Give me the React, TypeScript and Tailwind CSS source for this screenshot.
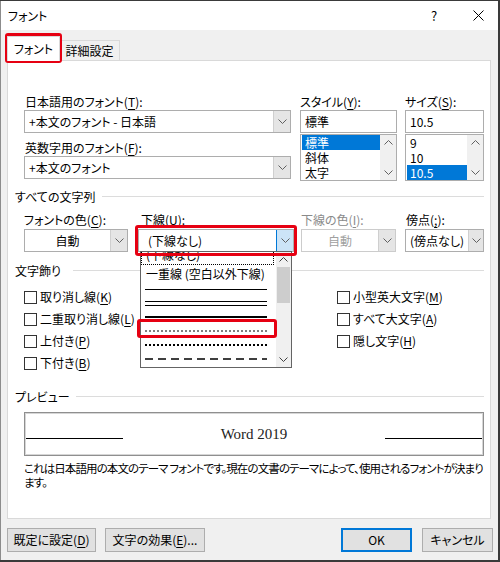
import React from "react";

const Chev = ({ up = false, color = "#606060" }: { up?: boolean; color?: string }) => (
  <svg width="9" height="5" viewBox="0 0 9 5" className="block">
    <polyline
      points={up ? "0.5,4.5 4.5,0.5 8.5,4.5" : "0.5,0.5 4.5,4.5 8.5,0.5"}
      fill="none"
      stroke={color}
      strokeWidth="1"
    />
  </svg>
);

const M = ({ c }: { c: string }) => <span className="underline underline-offset-[2px]">{c}</span>;

function Combo({
  children,
  center = false,
  disabled = false,
  focused = false,
}: {
  children: React.ReactNode;
  center?: boolean;
  disabled?: boolean;
  focused?: boolean;
}) {
  return (
    <div className={`flex h-[23px] border ${disabled ? "border-[#cccccc]" : "border-[#adadad]"} bg-white`}>
      <div
        className={`flex-1 flex items-center px-[4px] whitespace-nowrap ${center ? "justify-center" : ""} ${
          disabled ? "text-[#a0a0a0]" : ""
        }`}
      >
        {children}
      </div>
      <div
        className={`w-[17px] border-l flex items-center justify-center ${
          focused ? "bg-[#cce4f7] border-[#0078d7]" : "bg-[#e5e5e5] border-[#cfcfcf]"
        }`}
      >
        <Chev />
      </div>
    </div>
  );
}

function ListBox({ items, sel }: { items: string[]; sel: number }) {
  return (
    <div className="mt-px h-[47px] border border-[#adadad] bg-white flex overflow-hidden">
      <div className="flex-1 flex flex-col pl-px">
        {items.map((t, i) => (
          <div
            key={t}
            className={`h-[15px] leading-[15px] px-[3px] ${i === sel ? "bg-[#0078d7] text-white" : ""}`}
          >
            {t}
          </div>
        ))}
      </div>
      <div className="w-[16px] bg-[#f0f0f0] flex flex-col items-center justify-between py-[5px]">
        <Chev up />
        <Chev />
      </div>
    </div>
  );
}

const Section = ({ title, gap, className = "" }: { title: string; gap: string; className?: string }) => (
  <div className={`flex items-center -ml-[9px] h-[17px] ${className}`}>
    <span className="whitespace-nowrap">{title}</span>
    <div className={`flex-1 h-px bg-[#dcdcdc] ${gap}`} />
  </div>
);

const Check = ({ children }: { children: React.ReactNode }) => (
  <div className="h-[22px] flex items-center">
    <div className="w-[13px] h-[13px] border border-[#333333] bg-white" />
    <span className="ml-[3px] whitespace-nowrap">{children}</span>
  </div>
);

const LineRow = ({ children }: { children: React.ReactNode }) => (
  <div className="h-[14px] flex items-center pl-[4px]">{children}</div>
);

export default function App() {
  return (
    <div className="w-[500px] h-[562px] bg-[#3a3a3a] overflow-hidden font-['Noto_Sans_CJK_JP',sans-serif] [font-feature-settings:'palt'] text-[12px] text-black">
      <div className="relative mt-px w-[498px] h-[559px] border-l border-[#8c8c8c] bg-[#f0f0f0] flex flex-col">
        {/* title bar */}
        <div className="h-[29px] bg-white flex items-center pl-[7px]">
          <span>フォント</span>
          <div className="ml-auto flex h-full">
            <div className="w-[48px] flex items-center justify-center text-[13px]">?</div>
            <div className="w-[40px] flex items-center justify-center">
              <svg width="11" height="11" viewBox="0 0 11 11">
                <line x1="0.5" y1="0.5" x2="10.5" y2="10.5" stroke="#000" strokeWidth="1" />
                <line x1="10.5" y1="0.5" x2="0.5" y2="10.5" stroke="#000" strokeWidth="1" />
              </svg>
            </div>
          </div>
        </div>

        <div className="flex-1 flex flex-col pl-[6px] pr-[5px]">
          {/* tabs */}
          <div className="h-[30px] flex items-end">
            <div className="relative z-10 -mb-px h-[25px] w-[53px] bg-white border-t border-l border-r border-[#d9d9d9] flex items-center justify-center">
              フォント
            </div>
            <div className="h-[20px] w-[60px] border-t border-r border-[#d9d9d9] flex items-center justify-center">
              詳細設定
            </div>
          </div>

          {/* panel */}
          <div className="relative h-[459px] w-[484px] border border-[#d9d9d9] bg-white pl-[16px] pr-[6px] pt-[32px]">
            {/* row A */}
            <div className="flex">
              <div className="w-[267px] flex flex-col">
                <div className="h-[17px] leading-[17px] pl-px">
                  日本語用のフォント(<M c="T" />):
                </div>
                <Combo>+本文のフォント - 日本語</Combo>
                <div className="h-[23px] flex items-end pl-px">
                  <span className="leading-[17px]">
                    英数字用のフォント(<M c="F" />):
                  </span>
                </div>
                <Combo>+本文のフォント</Combo>
              </div>
              <div className="w-[97px] ml-[9px] flex flex-col">
                <div className="h-[17px] leading-[17px]">
                  スタイル(<M c="Y" />):
                </div>
                <div className="h-[23px] border border-[#adadad] bg-white flex items-center px-[4px]">標準</div>
                <ListBox items={["標準", "斜体", "太字"]} sel={0} />
              </div>
              <div className="w-[79px] ml-[8px] flex flex-col">
                <div className="h-[17px] leading-[17px]">
                  サイズ(<M c="S" />):
                </div>
                <div className="h-[23px] border border-[#adadad] bg-white flex items-center px-[4px]">10.5</div>
                <ListBox items={["9", "10", "10.5"]} sel={2} />
              </div>
            </div>

            <Section title="すべての文字列" gap="ml-[7px]" className="mt-[7px]" />

            {/* row B */}
            <div className="mt-[6px] flex">
              <div className="w-[104px] flex flex-col">
                <div className="h-[17px] leading-[17px]">
                  フォントの色(<M c="C" />):
                </div>
                <div className="mt-px">
                  <Combo center>自動</Combo>
                </div>
              </div>
              <div className="w-[156px] ml-[10px] flex flex-col">
                <div className="h-[17px] leading-[17px] pl-[3px]">
                  下線(<M c="U" />):
                </div>
                <div className="mt-px">
                  <Combo focused>
                    <span className="pl-[5px]">(下線なし)</span>
                  </Combo>
                </div>
              </div>
              <div className="w-[95px] ml-[7px] flex flex-col">
                <div className="h-[17px] leading-[17px] text-[#8a8a8a]">
                  下線の色(<M c="I" />):
                </div>
                <div className="mt-px">
                  <Combo center disabled>
                    自動
                  </Combo>
                </div>
              </div>
              <div className="w-[79px] ml-[9px] flex flex-col">
                <div className="h-[17px] leading-[17px] pl-px">
                  傍点(<M c=";" />):
                </div>
                <div className="mt-px">
                  <Combo>(傍点なし)</Combo>
                </div>
              </div>
            </div>

            <Section title="文字飾り" gap="ml-[12px]" className="mt-[10px]" />

            {/* checkboxes */}
            <div className="mt-[7px] flex">
              <div className="w-[313px] flex flex-col">
                <Check>
                  取り消し線(<M c="K" />)
                </Check>
                <Check>
                  二重取り消し線(<M c="L" />)
                </Check>
                <Check>
                  上付き(<M c="P" />)
                </Check>
                <Check>
                  下付き(<M c="B" />)
                </Check>
              </div>
              <div className="flex flex-col">
                <Check>
                  小型英大文字(<M c="M" />)
                </Check>
                <Check>
                  すべて大文字(<M c="A" />)
                </Check>
                <Check>
                  隠し文字(<M c="H" />)
                </Check>
              </div>
            </div>

            <Section title="プレビュー" gap="ml-[6px]" className="mt-[14px]" />

            {/* preview */}
            <div className="mt-[7px] h-[44px] border border-[#8f8f8f] shadow-[inset_0_0_0_1px_#d6d6d6] flex items-center justify-between px-[1px]">
              <div className="w-[97px] h-px bg-black mt-[9px]" />
              <span className="font-['Liberation_Serif',serif] text-[15px] text-[#222] [font-feature-settings:normal]">
                Word 2019
              </span>
              <div className="w-[97px] h-px bg-black mt-[9px]" />
            </div>

            <div className="mt-[5px] leading-[14px] whitespace-nowrap text-[11.5px] tracking-[-0.9px]">
              これは日本語用の本文のテーマ フォントです。現在の文書のテーマによって、使用されるフォントが決まり
              <br />
              ます。
            </div>

            {/* open dropdown list */}
            <div className="absolute left-[132px] top-[190px] w-[152px] h-[117px] border border-[#646464] bg-white overflow-hidden flex">
              <div className="flex-1 flex flex-col -mt-[4px] relative">
                <div className="h-[18px] flex items-center pl-[5px] whitespace-nowrap">
                  <span className="-mt-[4px]">(下線なし)</span>
                </div>
                <div className="absolute left-0 top-[3px] w-[133px] h-[14px] border border-dotted border-[#000]" />
                <div className="h-[16px] flex items-center pl-[5px] whitespace-nowrap">一重線 (空白以外下線)</div>
                <LineRow>
                  <div className="w-[122px] h-px bg-black" />
                </LineRow>
                <LineRow>
                  <div className="w-[122px] flex flex-col gap-[3px]">
                    <div className="h-px bg-black" />
                    <div className="h-px bg-black" />
                  </div>
                </LineRow>
                <LineRow>
                  <div className="w-[122px] h-[2px] bg-black" />
                </LineRow>
                <LineRow>
                  <svg width="122" height="2" className="block">
                    <line x1="0" y1="1" x2="122" y2="1" stroke="#000" strokeWidth="1" strokeDasharray="2 2" />
                  </svg>
                </LineRow>
                <LineRow>
                  <svg width="122" height="2" className="block">
                    <line x1="0" y1="1" x2="122" y2="1" stroke="#000" strokeWidth="2" strokeDasharray="2 2" />
                  </svg>
                </LineRow>
                <LineRow>
                  <svg width="122" height="2" className="block">
                    <line x1="0" y1="1" x2="122" y2="1" stroke="#000" strokeWidth="1.5" strokeDasharray="8 5" />
                  </svg>
                </LineRow>
              </div>
              <div className="w-[15px] bg-[#f0f0f0] flex flex-col items-center">
                <div className="h-[15px] flex items-center justify-center">
                  <Chev up color="#404040" />
                </div>
                <div className="w-[13px] h-[36px] bg-[#cdcdcd]" />
                <div className="flex-1" />
                <div className="h-[15px] flex items-center justify-center">
                  <Chev color="#404040" />
                </div>
              </div>
            </div>

            {/* annotations */}
            <div className="absolute left-[127px] top-[164px] w-[162px] h-[31px] border-[3px] border-[#e60012] rounded-[3px]" />
            <div className="absolute left-[129px] top-[258px] w-[140px] h-[19px] border-[3px] border-[#e60012] rounded-[3px]" />
          </div>

          {/* buttons */}
          <div className="mt-[9px] flex h-[24px]">
            <div className="w-[89px] bg-[#e1e1e1] border border-[#adadad] flex items-center justify-center whitespace-nowrap">
              既定に設定(<M c="D" />)
            </div>
            <div className="ml-[9px] w-[100px] bg-[#e1e1e1] border border-[#adadad] flex items-center justify-center whitespace-nowrap">
              文字の効果(<M c="E" />)...
            </div>
            <div className="ml-auto w-[71px] bg-[#e1e1e1] border border-[#0078d7] shadow-[inset_0_0_0_1px_#0078d7] flex items-center justify-center">
              OK
            </div>
            <div className="ml-[10px] w-[71px] bg-[#e1e1e1] border border-[#adadad] flex items-center justify-center">
              キャンセル
            </div>
          </div>
        </div>

        {/* tab annotation */}
        <div className="absolute left-[4px] top-[32px] w-[57px] h-[30px] border-[3px] border-[#e60012] rounded-[3px]" />
      </div>
    </div>
  );
}
